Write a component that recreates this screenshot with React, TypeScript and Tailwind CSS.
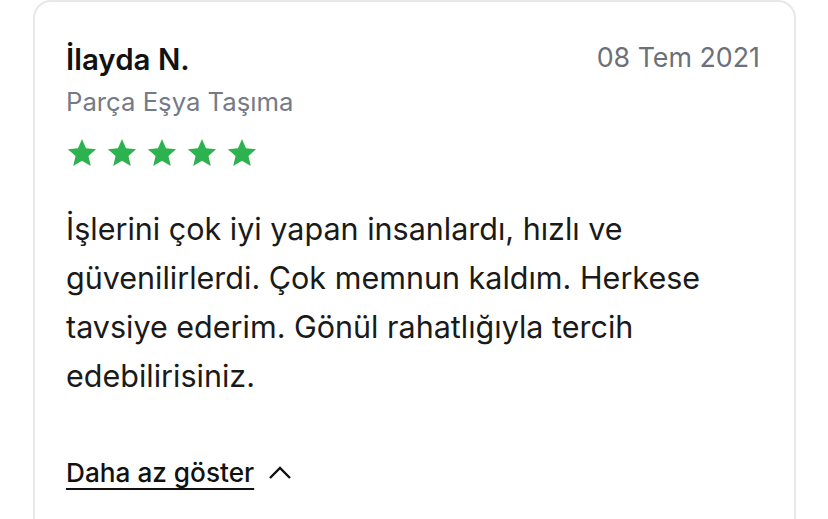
import React from 'react'

function Star() {
  return (
    <svg width="32" height="31" viewBox="0 0 24 24" className="text-[#2cb34f]">
      <path
        fill="currentColor"
        d="M12 1.6l3.1 7.2 7.8.7-5.9 5.2 1.8 7.7L12 18.3l-6.8 4.1 1.8-7.7L1.1 9.5l7.8-.7z"
      />
    </svg>
  )
}

export default function App() {
  return (
    <div className="h-screen overflow-hidden bg-white pl-[33px] pr-[32px] font-['Inter',sans-serif]">
      <div className="h-[600px] rounded-t-[18px] border-x-2 border-t-2 border-[#e8e8e8] pl-[31px] pr-[34px] pt-[37px]">
        {/* Header */}
        <div className="flex items-start justify-between">
          <h2 className="mt-[2px] text-[29.5px] font-semibold leading-[36px] text-[#111]">İlayda N.</h2>
          <span className="text-[26.8px] leading-[36px] text-[#6b7079]">08 Tem 2021</span>
        </div>
        <p className="mt-[9px] text-[25.7px] leading-[32px] text-[#747a86]">Parça Eşya Taşıma</p>

        {/* Rating */}
        <div className="mt-[19px] flex gap-[8px]">
          <Star />
          <Star />
          <Star />
          <Star />
          <Star />
        </div>

        {/* Body */}
        <p className="mt-[36px] w-[660px] text-[30.5px] leading-[49px] text-[#1a1a1a]">
          İşlerini çok iyi yapan insanlardı, hızlı ve güvenilirlerdi. Çok memnun kaldım. Herkese
          tavsiye ederim. Gönül rahatlığıyla tercih edebilirisiniz.
        </p>

        <button className="mt-[57px] flex items-center gap-[14px] text-[26.2px] font-medium leading-[32px] text-[#111]">
          <span className="underline decoration-2 underline-offset-[6px]">Daha az göster</span>
          <svg width="24" height="24" viewBox="0 0 24 24" fill="none" stroke="currentColor" strokeWidth={2.4}>
            <path d="M2 17l10-10 10 10" />
          </svg>
        </button>
      </div>
    </div>
  )
}
